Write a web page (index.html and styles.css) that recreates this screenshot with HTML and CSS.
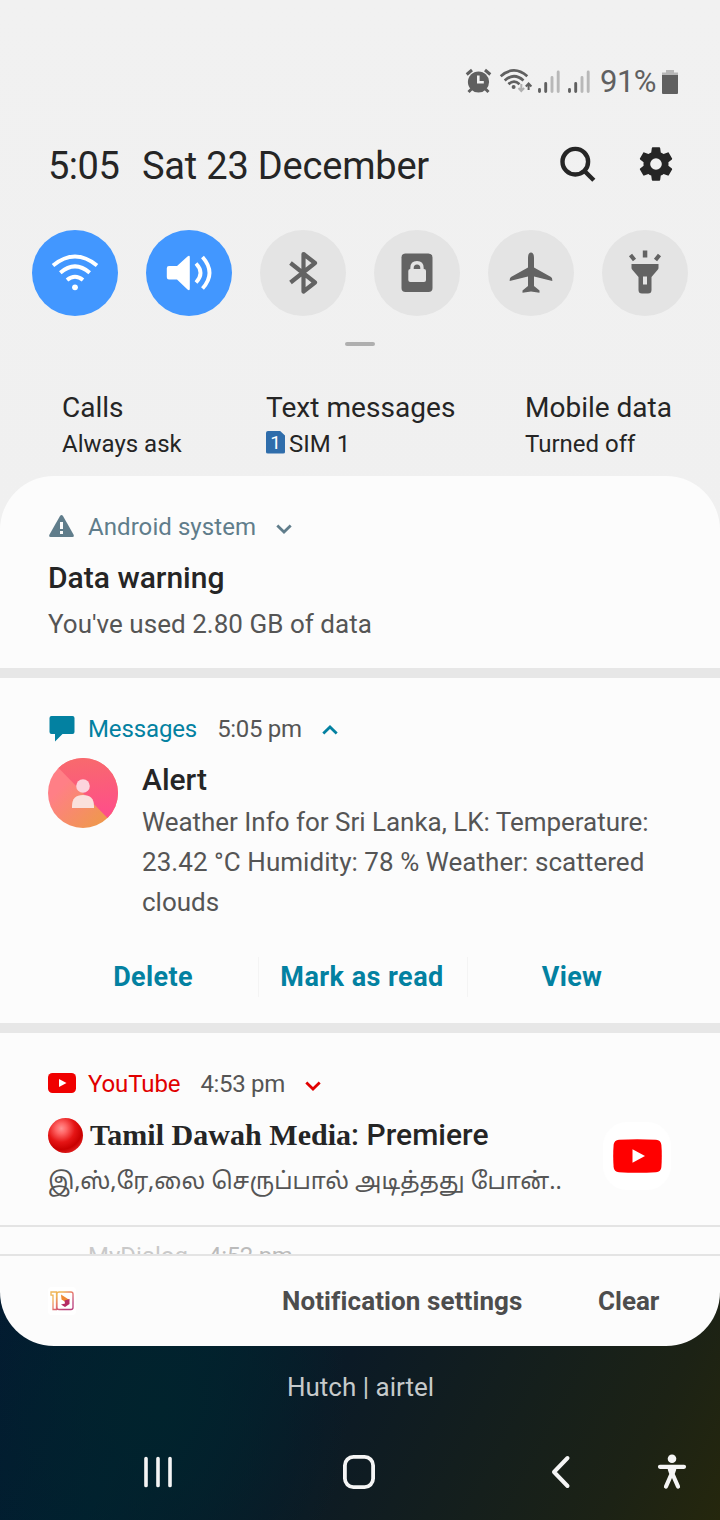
FILE: index.html
```html
<!DOCTYPE html>
<html lang="en">
<head>
<meta charset="utf-8">
<title>Notifications</title>
<link rel="stylesheet" href="styles.css">
</head>
<body>
<div class="screen">
  <header class="quick-panel">
    <div class="status-bar">
      <svg class="status-icons" width="130" height="32" viewBox="462 66 130 32">
        <g fill="#606060">
          <circle cx="478.500" cy="82" r="10.600"/>
          <path d="M471.500 89l-3 3M485.500 89l3 3" stroke="#606060" stroke-width="3"/>
          <path d="M466.700 74.500l5.300-4.500M490.300 74.500l-5.300-4.500" stroke="#606060" stroke-width="3"/>
          <path d="M478.300 75.500v6.800h5.500" fill="none" stroke="#f2f2f2" stroke-width="2.600"/>
        </g>
        <g fill="none" stroke="#606060" stroke-width="2.700">
          <path d="M500.700 76.300Q514 64.500 527.300 76.300"/>
          <path d="M504.700 80.500Q514 72 523.500 80.500"/>
          <path d="M508.500 84.200Q514 79 519.500 84.200"/>
        </g>
        <circle cx="513.600" cy="87" r="2" fill="#606060"/>
        <path d="M521.300 84v7M518.500 88l2.800 3 2.800-3" fill="none" stroke="#b0b0b0" stroke-width="2"/>
        <path d="M528.600 90v-6.500M525.800 86.500l2.800-3 2.800 3" fill="none" stroke="#606060" stroke-width="2"/>
        <g stroke-width="2.900" stroke-linecap="round">
          <path d="M539.500 89.500v2M545.700 83.500v8M569.500 89.500v2M575.700 83.500v8" stroke="#606060"/>
          <path d="M552 77.500v14M558.200 72v19.500M582 77.500v14M588.200 72v19.500" stroke="#b8b8b8"/>
        </g>
      </svg>
      <span class="battery-level">91%</span>
      <svg width="16" height="24" viewBox="0 0 16 24"><path d="M4 0h8v2.500h4v3H0v-3h4z" fill="#b8b8b8"/><path d="M0 5h16v18a1 1 0 0 1-1 1H1a1 1 0 0 1-1-1z" fill="#606060"/></svg>
    </div>

    <div class="date-row">
      <span class="clock">5:05</span>
      <span class="date">Sat 23 December</span>
      <svg class="search" width="36" height="36" viewBox="0 0 36 36" fill="none" stroke="#252525" stroke-width="4.400"><circle cx="15.300" cy="15.700" r="12.800"/><path d="M24.500 25l9.300 9.300"/></svg>
      <svg class="gear" width="40" height="40" viewBox="0 0 24 24" fill="#252525"><path d="M19.430 12.980c.04-.32.07-.64.07-.98s-.03-.66-.07-.98l2.110-1.650c.19-.15.24-.42.12-.64l-2-3.460c-.12-.22-.39-.3-.61-.22l-2.490 1c-.52-.4-1.080-.73-1.690-.98l-.38-2.650C14.460 2.180 14.250 2 14 2h-4c-.25 0-.46.18-.49.42l-.38 2.650c-.61.25-1.170.59-1.690.98l-2.490-1c-.23-.09-.49 0-.61.22l-2 3.460c-.13.22-.07.49.12.64l2.110 1.650c-.04.32-.07.65-.07.98s.03.66.07.98l-2.110 1.650c-.19.15-.24.42-.12.64l2 3.460c.12.22.39.3.61.22l2.490-1c.52.4 1.080.73 1.690.98l.38 2.650c.03.24.24.42.49.42h4c.25 0 .46-.18.49-.42l.38-2.650c.61-.25 1.170-.59 1.690-.98l2.490 1c.23.09.49 0 .61-.22l2-3.460c.12-.22.07-.49-.12-.64zM12 15.500A3.500 3.500 0 1 1 12 8.500a3.500 3.500 0 0 1 0 7z"/></svg>
    </div>

    <div class="toggles">
      <div class="toggle on"><svg width="86" height="86" viewBox="0 0 86 86"><g fill="none" stroke="#fff" stroke-width="3.900"><path d="M21 35.500Q43 17.500 65 35.500"/><path d="M28.300 42.700Q43 30 57.700 42.700"/><path d="M35 50Q43 43.500 51 50"/></g><circle cx="43" cy="57.300" r="2.900" fill="#fff"/></svg></div>
      <div class="toggle on"><svg width="86" height="86" viewBox="0 0 86 86"><path d="M23 36h8l10.500-9.500q2.300-1.700 2.300.8v31.400q0 2.500-2.300.8L31 49.500h-8q-2.200 0-2.200-2.200v-9q0-2.300 2.200-2.300z" fill="#fff"/><g fill="none" stroke="#fff" stroke-width="3.800"><path d="M50 33.500q9 9.300 0 19"/><path d="M56.500 27q14 16 0 31.500"/></g></svg></div>
      <div class="toggle"><svg width="86" height="86" viewBox="0 0 86 86"><path d="M30.500 33L55 52.500 43.500 61.500V24L55 33 30.500 52.500" fill="none" stroke="#636363" stroke-width="4.200" stroke-linejoin="round"/></svg></div>
      <div class="toggle"><svg width="86" height="86" viewBox="0 0 86 86"><rect x="27.500" y="23.500" width="31" height="38.500" rx="4" fill="#636363"/><rect x="34.300" y="39" width="17.700" height="13" rx="2" fill="#e4e4e4"/><path d="M38 40v-2q0-5.300 5-5.300t5 5.300v2" fill="none" stroke="#e4e4e4" stroke-width="3.400"/></svg></div>
      <div class="toggle"><svg width="86" height="86" viewBox="0 0 86 86"><path d="M43 22.500q3 0 3 5.500v9.500L63 47q1.500 1 1.300 4L46 46.500V56l5.500 4.500v2.300L43 61.500l-8.500 1.300v-2.300L40 56v-9.500L21.700 51q-.2-3 1.300-4l17-9.500V28q0-5.500 3-5.500z" fill="#636363"/></svg></div>
      <div class="toggle"><svg width="86" height="86" viewBox="0 0 86 86"><g fill="#636363"><path d="M29.500 34h27v4q0 1-1 2l-6 7v13q0 3.500-3.500 3.500h-6q-3.500 0-3.500-3.500V47l-6-7q-1-1-1-2z"/><path d="M40.800 20.500h4.500v7h-4.500z"/></g><path d="M28.500 25l4 5M57.500 25l-4 5" stroke="#636363" stroke-width="4"/><path d="M41 46.500h4v8h-4z" fill="#e4e4e4"/></svg></div>
    </div>
    <div class="handle"></div>

    <div class="sim-row">
      <div class="sim calls"><b>Calls</b><span>Always ask</span></div>
      <div class="sim texts"><b>Text messages</b><span class="sim-value"><i class="sim-chip">1</i>SIM 1</span></div>
      <div class="sim data"><b>Mobile data</b><span>Turned off</span></div>
    </div>
  </header>

  <main class="shade">
    <section class="card warning">
      <div class="app-row slate">
        <svg class="app-icon" width="26" height="24" viewBox="0 0 26 24"><path d="M13.500 0Q14.300 0 15 1l10.500 18.500q1 2.500-1 2.500H2.500q-2 0-1-2.500L12 1q.7-1 1.500-1z" fill="#607d8b"/><path d="M13.500 7v7M13.500 16v3" stroke="#fcfcfc" stroke-width="3"/></svg>
        <span class="app-name">Android system</span>
        <svg class="chevron" width="16" height="10" viewBox="0 0 16 10" fill="none" stroke="currentColor" stroke-width="2.800"><path d="M1.300 1.500L8 8l6.700-6.500"/></svg>
      </div>
      <h2>Data warning</h2>
      <p>You've used 2.80 GB of data</p>
    </section>

    <section class="card messages">
      <div class="app-row teal">
        <svg class="app-icon" width="27" height="26" viewBox="0 0 27 26"><path d="M3.500 0h21q2 0 2 2v14q0 2-2 2H14.500L7 25.500V18H3.500q-2 0-2-2V2q0-2 2-2z" fill="#0381a1"/></svg>
        <span class="app-name">Messages</span>
        <span class="time">5:05 pm</span>
        <svg class="chevron" width="16" height="10" viewBox="0 0 16 10" fill="none" stroke="currentColor" stroke-width="2.800"><path d="M1.300 8.500L8 2l6.700 6.500"/></svg>
      </div>
      <div class="message">
        <svg class="avatar" width="70" height="70" viewBox="0 0 70 70">
          <defs>
            <linearGradient id="coral" x1="0" y1="0" x2="1" y2="1"><stop offset=".3" stop-color="#ff7f86"/><stop offset=".85" stop-color="#ef984d"/></linearGradient>
            <linearGradient id="rose" x1=".7" y1="0" x2=".8" y2="1"><stop offset="0" stop-color="#f8696e"/><stop offset="1" stop-color="#ff4c8b"/></linearGradient>
          </defs>
          <circle cx="35" cy="35" r="35" fill="url(#coral)"/>
          <path d="M10.500 10A35 35 0 0 1 59.500 60z" fill="url(#rose)"/>
          <circle cx="35" cy="28" r="6.800" fill="#fcd4dd"/><path d="M24 50v-2q0-11 11-11t11 11v2z" fill="#fae0dc"/>
        </svg>
        <div class="message-text">
          <h2>Alert</h2>
          <p>Weather Info for Sri Lanka, LK: Temperature:<br><span class="line-two">23.42 °C Humidity: 78 % Weather: scattered</span><br>clouds</p>
        </div>
      </div>
      <div class="actions"><span>Delete</span><span>Mark as read</span><span>View</span></div>
    </section>

    <section class="card youtube">
      <div class="app-row red">
        <svg class="app-icon" width="28" height="20" viewBox="0 0 28 20"><rect width="28" height="20" rx="4.500" fill="#f00000"/><path d="M11 6l7.500 4-7.500 4z" fill="#fff"/></svg>
        <span class="app-name">YouTube</span>
        <span class="time">4:53 pm</span>
        <svg class="chevron" width="16" height="10" viewBox="0 0 16 10" fill="none" stroke="currentColor" stroke-width="2.800"><path d="M1.300 1.500L8 8l6.700-6.500"/></svg>
      </div>
      <div class="video">
        <div class="video-text">
          <h2><i class="red-ball"></i><span class="serif">Tamil Dawah Media</span>: Premiere</h2>
          <p class="tamil" lang="ta">இ,ஸ்,ரே,லை செருப்பால் அடித்தது போன்..</p>
        </div>
        <div class="thumb"><svg width="49" height="34" viewBox="0 0 49 34"><path d="M6 .7Q24 -.4 43 .7 48 1.200 48.400 6 49.200 17 48.400 28 48 32.800 43 33.300 24 34.400 6 33.300 1 32.800.6 28-.2 17 .6 6 1 1.200 6 .7z" fill="#f00"/><path d="M19.500 10.300L32 17l-12.500 6.700z" fill="#fff"/></svg></div>
      </div>
    </section>

    <section class="clipped"><span>MyDialog</span><span class="time">4:52 pm</span></section>

    <footer class="shade-footer">
      <div class="mini-app"><svg width="24" height="20" viewBox="0 0 24 20">
        <defs><linearGradient id="frame" x1="0" y1="0" x2="1" y2="1"><stop offset=".25" stop-color="#efb454"/><stop offset=".5" stop-color="#e8786a"/><stop offset=".8" stop-color="#b93c79"/></linearGradient></defs>
        <path d="M1 1h5.500v17.500H3V4.200H1zM9 1h12q2 0 2 2v13.500q0 2-2 2H9q-2 0-2-2V3q0-2 2-2z" fill="none" stroke="url(#frame)" stroke-width="1.300"/>
        <path d="M11 3.500l8.500 5.500-4 2-4-2.500z" fill="#f08a35"/><path d="M14.500 9.500l5-1.500v5L15 16l-4-2.500 4-1z" fill="#b52b64"/></svg></div>
      <span class="settings">Notification settings</span>
      <span class="clear">Clear</span>
    </footer>
  </main>

  <div class="carrier">Hutch | airtel</div>
  <nav class="nav-bar">
    <svg width="30" height="32" viewBox="0 0 30 32" stroke="#f5f5f5" stroke-width="3.600" stroke-linecap="round"><path d="M3 1.500v29M15 1.500v29M27 1.500v29" transform="translate(0 1) scale(1 .94)"/></svg>
    <svg width="32" height="34" viewBox="0 0 32 34" fill="none" stroke="#f5f5f5" stroke-width="3.800"><rect x="1.900" y="1.900" width="28.200" height="30.200" rx="8.500"/></svg>
    <svg width="20" height="34" viewBox="0 0 20 34" fill="none" stroke="#f5f5f5" stroke-width="4" stroke-linecap="round" stroke-linejoin="round"><path d="M16.500 3L3 17l13.500 14"/></svg>
    <svg width="30" height="36" viewBox="0 0 30 36"><circle cx="15" cy="4.700" r="4.300" fill="#f5f5f5"/><path d="M3 12.800h24M12.800 15l1.700 5L9 32.500M17.200 15l-1.700 5L21 32.500M15 14v8" fill="none" stroke="#f5f5f5" stroke-width="4.200" stroke-linecap="round"/></svg>
  </nav>
</div>
</body>
</html>
```

FILE: styles.css
```css
* { box-sizing: border-box; }
body, h2, p { margin: 0; }
body { font-family: Roboto, "Noto Sans", sans-serif; color: #252525; }
svg { display: block; flex: none; }
span, h2, p, b { white-space: nowrap; }

.screen {
  width: 720px;
  height: 1520px;
  overflow: hidden;
  display: flex;
  flex-direction: column;
  background:
    linear-gradient(#f1f1f1, #f0f0f0) 0 0 / 720px 530px no-repeat,
    radial-gradient(ellipse 190px 230px at 160px 1410px, #01232d 0%, #01232d00 100%),
    linear-gradient(118deg, #031a31 0%, #01202f 25%, #0b1a26 46%, #151f1c 70%, #1c2215 86%, #25270d 100%) 0 1280px / 720px 240px no-repeat;
}

.quick-panel { height: 476px; display: flex; flex-direction: column; }
.status-bar { height: 112px; padding: 66px 42px 14px 462px; display: flex; align-items: center; }
.battery-level { width: 70px; padding-left: 8px; font-size: 31px; letter-spacing: -.5px; line-height: 32px; color: #606060; }
.date-row { height: 108px; padding-left: 48px; display: flex; align-items: center; font-size: 38px; letter-spacing: -.2px; line-height: 40px; }
.clock { width: 94px; letter-spacing: -.5px; }
.date { width: 418px; }
.search { margin-top: -4px; }
.gear { margin: -4px 0 0 40px; }
.toggles { height: 106px; padding: 10px 32px; display: flex; justify-content: space-between; }
.toggle { width: 86px; height: 86px; border-radius: 50%; background: #e4e4e4; }
.toggle.on { background: #4297ff; }
.handle { width: 30px; height: 4px; margin: 16px auto 0; border-radius: 2px; background: #afafaf; }
.sim-row { margin-top: 44px; padding-left: 62px; display: grid; grid-template-columns: 204px 259px 1fr; }
.sim { display: flex; flex-direction: column; font-size: 24px; line-height: 36px; }
.sim b { font-size: 28px; font-weight: 400; line-height: 36px; }
.texts b { letter-spacing: .05px; }
.sim-value { display: flex; align-items: center; gap: 4px; }
.sim-chip {
  width: 19px; height: 23px; margin-top: -4px;
  background: #2f6dab; color: #fff; border-radius: 2px;
  clip-path: polygon(0 0, 72% 0, 100% 22%, 100% 100%, 0 100%);
  font-size: 19px; font-style: normal; line-height: 23px; text-align: center;
}

.shade {
  height: 870px;
  border-radius: 54px;
  overflow: hidden;
  background: #fcfcfc;
  display: flex;
  flex-direction: column;
}
.card { padding: 0 48px; }
.warning { height: 202px; padding-top: 33px; border-bottom: 10px solid #e7e7e7; }
.messages { height: 355px; padding-top: 33px; border-bottom: 10px solid #e7e7e7; }
.youtube { height: 194px; padding-top: 33px; border-bottom: 2px solid #e4e4e4; }
.app-row { height: 36px; display: flex; align-items: center; font-size: 24px; line-height: 36px; }
.app-icon { margin-right: 14px; }
.messages .app-icon { margin-right: 13px; }
.youtube .app-icon { margin: -2px 12px 0 0; }
.slate { color: #607d8b; }
.slate .app-name { letter-spacing: .07px; }
.teal { color: #0381a1; }
.teal .app-name, .red .app-name { letter-spacing: -.12px; }
.red { color: #e10000; }
.time { margin-left: 20px; color: #555; letter-spacing: -.3px; }
.chevron { margin: 4px 0 0 20px; }
.messages .chevron { margin-top: 2px; }
h2 { font-size: 30px; font-weight: 500; line-height: 40px; }
p { font-size: 26px; line-height: 40px; color: #555; }
.warning h2 { margin-top: 13px; }
.warning p { margin-top: 6px; letter-spacing: .03px; }
.message { margin-top: 11px; display: flex; gap: 24px; }
.message-text { padding-top: 2px; }
.message-text p { margin-top: 2px; letter-spacing: -.02px; }
.line-two { letter-spacing: .05px; }
.actions { height: 40px; margin: 35px 0 0; display: grid; grid-template-columns: 210px 209px 209px; color: #0381a1; font-size: 27px; letter-spacing: .35px; font-weight: 700; line-height: 40px; text-align: center; }
.actions span + span { border-left: 1px solid #f4f4f4; }
.actions span:nth-child(2) { padding-right: 2px; letter-spacing: .45px; }
.video { display: flex; margin-top: 8px; }
.video-text { width: 550px; padding-top: 5px; }
.video h2 { display: flex; align-items: center; white-space: pre; letter-spacing: .03px; }
.serif { font-family: "Liberation Serif", serif; font-weight: 700; }
.red-ball { width: 35px; height: 35px; margin-right: 7px; border-radius: 50%; background: radial-gradient(circle at 38% 30%, #ff9292 0%, #f66 16%, #e51515 42%, #c90000 64%, #e33 88%, #b44 100%); }
.video-text .tamil { margin-top: 9px; font-family: "Noto Sans Tamil", "Noto Sans", "Lohit Tamil", sans-serif; font-size: 23.5px; }
.thumb { width: 68px; height: 68px; margin: 12px 0 0 5px; border-radius: 24px; background: #fff; display: flex; align-items: center; justify-content: center; }
.clipped { height: 27px; padding: 11px 0 0 88px; overflow: hidden; font-size: 24px; line-height: 36px; color: #c9c9c9; }
.clipped .time { color: #bbb; }
.shade-footer { height: 92px; border-top: 2px solid #e4e4e4; padding-left: 48px; display: flex; align-items: center; font-size: 26px; font-weight: 700; color: #4d4d4d; }
.mini-app { width: 28px; height: 28px; border-radius: 4px; background: #fff; display: flex; align-items: center; justify-content: center; }
.settings { width: 316px; margin-left: 206px; letter-spacing: .1px; }

.carrier { height: 82px; padding-left: 1px; line-height: 82px; text-align: center; font-size: 26px; color: #c6cacb; }
.nav-bar { height: 88px; padding-left: 143px; display: flex; align-items: center; }
.nav-bar svg:nth-child(2) { margin-left: 170px; }
.nav-bar svg:nth-child(3) { margin-left: 176px; }
.nav-bar svg:nth-child(4) { margin-left: 86px; }
```
